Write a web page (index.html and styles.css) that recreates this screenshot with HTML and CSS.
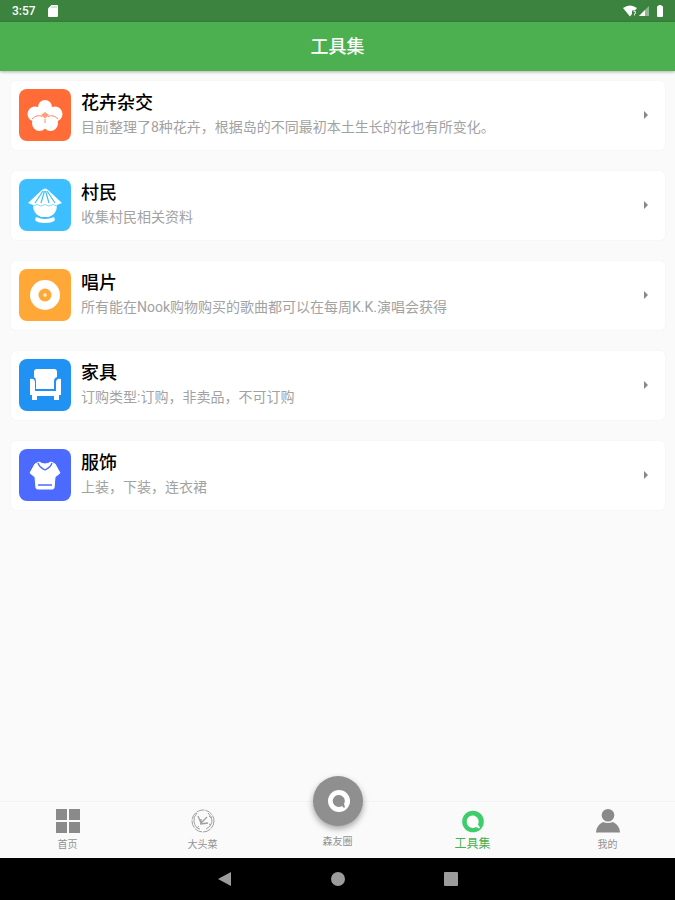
FILE: index.html
```
<!DOCTYPE html>
<html lang="zh-CN">
<head>
    <meta charset="UTF-8">
    <meta name="viewport" content="width=device-width, initial-scale=1">
    <title>工具集</title>
    <link rel="stylesheet" href="styles.css">
</head>
<body>
    <div class="status-bar">
        <span class="time">3:57</span>
        <svg class="sd-icon" width="12" height="14" viewBox="0 0 12 14"><path d="M4.500 1H10a1 1 0 0 1 1 1v10a1 1 0 0 1-1 1H2a1 1 0 0 1-1-1V4.500z" fill="#fff"/><path d="M5 2v2M7 2v2M9 2v2" stroke="#a9c9ab" stroke-width="1"/></svg>
        <div class="status-icons">
            <svg width="28" height="14" viewBox="0 0 28 14">
                <path d="M0 4Q7-1 14 4L12 6.500H9V10L7 12.500z" fill="#fff"/>
                <path d="M10.500 7.500h2v2h-1v2" fill="none" stroke="#d5e6d6" stroke-width="1"/>
                <path d="M26 2v10H16z" fill="#8fba91"/>
                <path d="M22 6v6h-6z" fill="#fff"/>
            </svg>
            <svg width="8" height="14" viewBox="0 0 8 14"><path d="M2.500 1h3v1H6a1 1 0 0 1 1 1v9a1 1 0 0 1-1 1H2a1 1 0 0 1-1-1V3a1 1 0 0 1 1-1h.5z" fill="#fff"/></svg>
        </div>
    </div>
    <header class="app-bar">
        <h1>工具集</h1>
    </header>

    <main class="tool-list">
        <a href="#" class="card">
            <span class="card-icon orange">
                <svg viewBox="0 0 52 52">
                    <g fill="#fff">
                        <circle cx="26" cy="18" r="7"/>
                        <circle cx="16" cy="25" r="7.500"/>
                        <circle cx="36" cy="25" r="7.500"/>
                        <circle cx="20.500" cy="34.500" r="7.500"/>
                        <circle cx="31.500" cy="34.500" r="7.500"/>
                        <circle cx="26" cy="26" r="6"/>
                    </g>
                    <path d="M13 30q5-5 10-2.500M39 30q-5-5-10-2.500M26 30v4" fill="none" stroke="#ff8c62" stroke-width="1"/>
                    <path d="M22 26l4-3 4 3-4 3.500z" fill="#ff9d79"/>
                </svg>
            </span>
            <span class="card-text">
                <span class="card-title">花卉杂交</span>
                <span class="card-desc">目前整理了8种花卉，根据岛的不同最初本土生长的花也有所变化。</span>
            </span>
            <svg class="arrow" viewBox="0 0 6 8"><path d="M1 0l4 4-4 4z"/></svg>
        </a>
        <a href="#" class="card">
            <span class="card-icon cyan">
                <svg viewBox="0 0 52 52">
                    <path d="M23 11q3-3 6 0l14 13-5 2H14l-5-2z" fill="#fff"/>
                    <path d="M24 12l-8 12M25.500 12L22 24M26.500 12L30 24M28 12l8 12" stroke="#3dbfff" stroke-width="1.200"/>
                    <path d="M14 26h24q0 8-7 12H21q-7-4-7-12z" fill="#fff"/>
                    <path d="M14 27l4-1.500 4 1.500 4-1.500 4 1.500 4-1.500 4 1.500" fill="none" stroke="#8bd9ff" stroke-width="1"/>
                    <path d="M17 38q9 4 18 0l1 3q-2 3-10 3t-10-3z" fill="#fff"/>
                    <path d="M18 36.500q8 5 16 0" fill="none" stroke="#3dbfff" stroke-width="1"/>
                </svg>
            </span>
            <span class="card-text">
                <span class="card-title">村民</span>
                <span class="card-desc">收集村民相关资料</span>
            </span>
            <svg class="arrow" viewBox="0 0 6 8"><path d="M1 0l4 4-4 4z"/></svg>
        </a>
        <a href="#" class="card">
            <span class="card-icon amber">
                <svg viewBox="0 0 52 52">
                    <circle cx="26" cy="26" r="15" fill="#fff"/>
                    <circle cx="26" cy="26" r="6.500" fill="#ffa837"/>
                    <path d="M26 24v4M24 26h4" stroke="#fff" stroke-width="1.200"/>
                </svg>
            </span>
            <span class="card-text">
                <span class="card-title">唱片</span>
                <span class="card-desc">所有能在Nook购物购买的歌曲都可以在每周K.K.演唱会获得</span>
            </span>
            <svg class="arrow" viewBox="0 0 6 8"><path d="M1 0l4 4-4 4z"/></svg>
        </a>
        <a href="#" class="card">
            <span class="card-icon blue">
                <svg viewBox="0 0 52 52">
                    <path d="M18 10h17q3 0 3 3v5q-3 1-3 4v8H17v-8q0-3-2-4v-5q0-3 3-3z" fill="#fff"/>
                    <path d="M11 20q5-1 5 4v8h21v-8q0-5 5-4v16h-2v5h-5v-4H18v4h-5v-5h-2z" fill="#fff"/>
                </svg>
            </span>
            <span class="card-text">
                <span class="card-title">家具</span>
                <span class="card-desc">订购类型:订购，非卖品，不可订购</span>
            </span>
            <svg class="arrow" viewBox="0 0 6 8"><path d="M1 0l4 4-4 4z"/></svg>
        </a>
        <a href="#" class="card">
            <span class="card-icon indigo">
                <svg viewBox="0 0 52 52">
                    <path d="M20 13q6 4 12 0l4 2 5 9-5 4-1 11q0 1-2 1H19q-2 0-2-1l-1-11-5-4 5-9z" fill="#fff" stroke="#fff" stroke-width="1" stroke-linejoin="round"/>
                    <path d="M19 14q1 4 7 7 6-3 7-7M19 36h14" fill="none" stroke="#4d6aff" stroke-width="1.300"/>
                </svg>
            </span>
            <span class="card-text">
                <span class="card-title">服饰</span>
                <span class="card-desc">上装，下装，连衣裙</span>
            </span>
            <svg class="arrow" viewBox="0 0 6 8"><path d="M1 0l4 4-4 4z"/></svg>
        </a>
    </main>

    <nav class="tab-bar">
        <a href="#" class="tab">
            <svg class="tab-icon" viewBox="0 0 24 24"><path d="M0 0h11v11H0zM13 0h11v11H13zM0 13h11v11H0zM13 13h11v11H13z" fill="#8a8a8a"/></svg>
            <span>首页</span>
        </a>
        <a href="#" class="tab">
            <svg class="tab-icon" viewBox="0 0 24 24" fill="none" stroke="#a0a0a0">
                <circle cx="12" cy="12" r="11" stroke-dasharray="8 1"/>
                <path d="M6 4q-4 4-3 9 1 6 6 7M17 4q5 4 4 9-1 5-6 7M18 7l2 2M18 15l2 1M6 19l2-2"/>
                <path d="M7 7l3 7 6-6M9 15l8-1M10 10v5" stroke-width="1.300"/>
            </svg>
            <span>大头菜</span>
        </a>
        <a href="#" class="tab tab-center">
            <span class="fab">
                <svg viewBox="0 0 24 24"><circle cx="13" cy="12" r="11" fill="#fff"/><path d="M13 6a6 6 0 1 0 3 11l2 2 1-1-1-3a6 6 0 0 0-5-9z" fill="#8f8f8f"/></svg>
            </span>
            <span>森友圈</span>
        </a>
        <a href="#" class="tab active">
            <svg class="tab-icon" viewBox="0 0 24 24"><circle cx="12" cy="12.500" r="10.800" fill="#3dce6b"/><path d="M12 6.500a6.200 6.200 0 1 0 3 11.500l3 1.500 1-1-2-3a6.200 6.200 0 0 0-5-9z" fill="#fff"/></svg>
            <span>工具集</span>
        </a>
        <a href="#" class="tab">
            <svg class="tab-icon" viewBox="0 0 24 24"><circle cx="12" cy="6.300" r="6.300" fill="#8a8a8a"/><path d="M0 23.500q0-7 7-10.500 5 2 10 0 7 3.500 7 10.500z" fill="#8a8a8a"/></svg>
            <span>我的</span>
        </a>
    </nav>
    <div class="system-bar">
        <button aria-label="返回"><svg viewBox="0 0 16 16"><path d="M14 1v14L1 8z"/></svg></button>
        <button aria-label="主页"><svg viewBox="0 0 16 16"><circle cx="8" cy="8" r="7"/></svg></button>
        <button aria-label="最近"><svg viewBox="0 0 16 16"><rect x="1" y="1" width="14" height="14" rx="1"/></svg></button>
    </div>
</body>
</html>
```
FILE: styles.css
```
* {
    box-sizing: border-box;
}
body {
    margin: 0;
    min-height: 100vh;
    display: flex;
    flex-direction: column;
    background-color: #fafafa;
    font-family: Roboto, "Noto Sans CJK SC", sans-serif;
}
a {
    color: inherit;
    text-decoration: none;
}
svg {
    display: block;
}
.status-bar {
    display: flex;
    align-items: center;
    height: 22px;
    padding: 0 11px 0 12px;
    background-color: #3b833e;
    color: white;
}
.time {
    font-size: 12px;
    font-weight: 500;
}
.sd-icon {
    margin-left: 11px;
}
.status-icons {
    display: flex;
    gap: 5px;
    margin-left: auto;
}
.app-bar {
    display: flex;
    align-items: center;
    justify-content: center;
    height: 49px;
    background-color: #4caf50;
    color: white;
    box-shadow: 0 1px 3px rgba(0, 0, 0, 0.3);
}
.app-bar h1 {
    margin: 0;
    font-size: 18px;
    line-height: 24px;
    font-weight: 500;
}
.tool-list {
    flex: 1;
    display: flex;
    flex-direction: column;
    gap: 21px;
    padding: 10px 10px 32px 11px;
}
.card {
    display: flex;
    align-items: center;
    padding: 8px 16px 9px 8px;
    background-color: white;
    border-radius: 5px;
    box-shadow: 0 0 2px rgba(0, 0, 0, 0.06);
}
.card-icon {
    width: 52px;
    height: 52px;
    border-radius: 8px;
}
.orange {
    background-color: #ff6c37;
}
.cyan {
    background-color: #3dbfff;
}
.amber {
    background-color: #ffa837;
}
.blue {
    background-color: #2092f3;
}
.indigo {
    background-color: #4d6aff;
}
.card-text {
    flex: 1;
    display: flex;
    flex-direction: column;
    margin-left: 10px;
}
.card-title {
    font-size: 18px;
    line-height: 24px;
    font-weight: 500;
    color: black;
}
.card-desc {
    font-size: 14px;
    line-height: 24px;
    color: #a2a2a2;
}
.arrow {
    width: 6px;
    height: 8px;
    fill: #888;
}
.tab-bar {
    display: flex;
    height: 57px;
    border-top: 1px solid #f3f3f3;
    color: #929292;
    font-size: 10px;
    line-height: 14px;
}
.tab {
    flex: 1;
    display: flex;
    flex-direction: column;
    align-items: center;
    gap: 5px;
    padding-top: 7px;
}
.tab-icon {
    width: 24px;
    height: 24px;
}
.tab.active {
    gap: 4px;
    color: #4caf50;
    font-size: 12px;
}
.tab-center {
    gap: 9px;
    padding-top: 0;
    margin-top: -26px;
}
.fab {
    display: flex;
    align-items: center;
    justify-content: center;
    width: 50px;
    height: 50px;
    border-radius: 50%;
    background-color: #8f8f8f;
    box-shadow: 0 3px 6px rgba(0, 0, 0, 0.35);
}
.fab svg {
    width: 24px;
    height: 24px;
}
.system-bar {
    display: flex;
    align-items: center;
    justify-content: center;
    gap: 97px;
    height: 42px;
    background-color: black;
}
.system-bar button {
    width: 16px;
    height: 16px;
    padding: 0;
    border: none;
    background: none;
}
.system-bar svg {
    fill: #9c9c9c;
}
```
